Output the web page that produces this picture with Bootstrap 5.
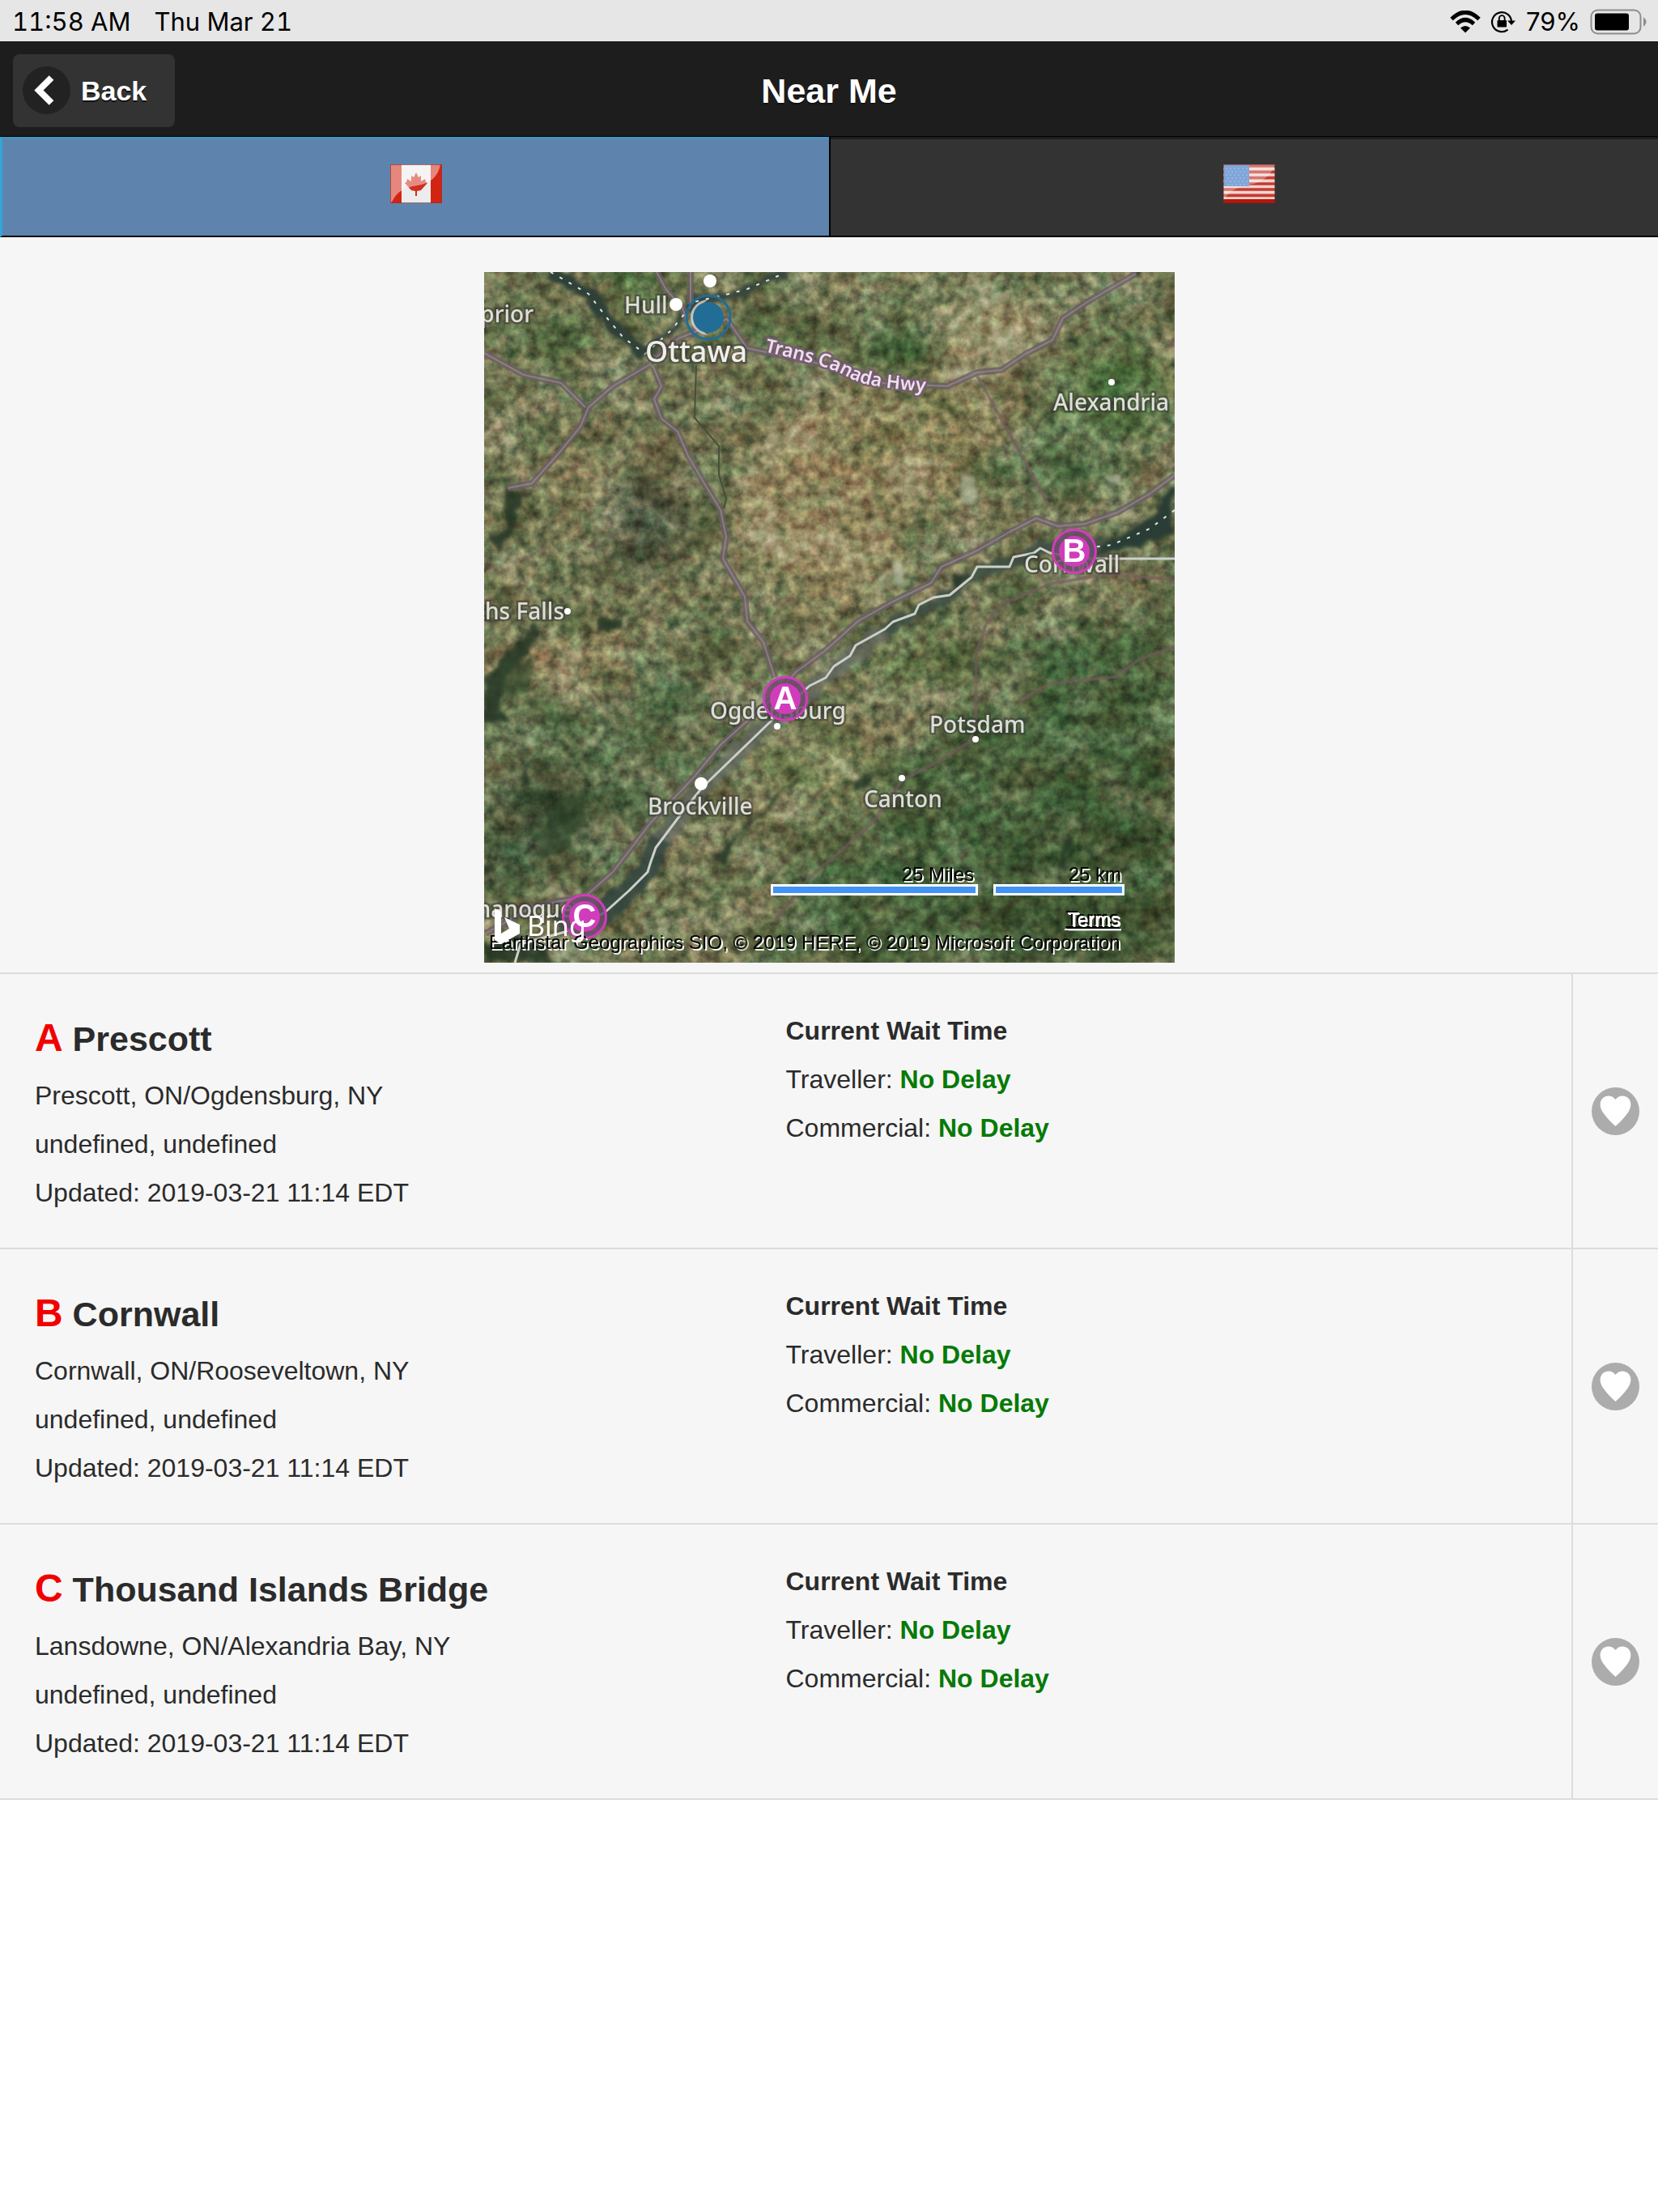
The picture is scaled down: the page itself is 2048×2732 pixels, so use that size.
<!DOCTYPE html>
<html lang="en">
<head>
<meta charset="utf-8">
<meta name="viewport" content="width=device-width, initial-scale=1">
<title>Near Me</title>
<link href="https://cdn.jsdelivr.net/npm/bootstrap@5.3.0/dist/css/bootstrap.min.css" rel="stylesheet">
<style>
  body { font-family: "Liberation Sans", Arial, sans-serif; font-size: 32px; line-height: 60px; color: #2b2b2b; background: #fff; }
  svg { display: block; }
  .status-bar { height: 51px; padding: 2px 12px 0 15px; background: #e6e6e6; color: #000; font: 31px/49px Inter, sans-serif; }
  .status-left { gap: 29px; font-variant-numeric: tabular-nums; }
  .status-icons { gap: 12px; }
  .app-header { display: grid; grid-template-columns: 1fr auto 1fr; align-items: center; height: 118px; padding: 4px 16px 0; background: #1d1d1d; border-bottom: 1px solid #000; }
  .app-header h1 { font-size: 43px; line-height: 60px; font-weight: 700; color: #fff; text-shadow: 0 2px 0 #111; }
  .back-btn { justify-self: start; gap: 13px; height: 90px; padding: 0 35px 0 12px; border: 0; border-radius: 8px; background: #333; color: #fff; font-size: 34px; font-weight: 700; line-height: 60px; text-shadow: 0 2px 0 #111; }
  .back-btn:hover { background: #3c3c3c; color: #fff; }
  .tab { height: 124px; padding-bottom: 9px; background: #333; border-top: 3px solid #1d1d1d; border-bottom: 2px solid #000; }
  .tab-on { background: #5e84ad; border-top-color: #4793bd; border-left: 3px solid #33a5d9; box-shadow: 2px 0 0 #000; z-index: 1; }
  .tab-off { padding-left: 13px; }
  .content-area { background: #f6f6f6; }
  .map-wrap { padding: 43px 0 12px; }
  .map-wrap svg { width: 853px; max-width: 100%; height: auto; }
  .place { font-family: "Noto Sans", "Open Sans", sans-serif; font-size: 28px; font-weight: 500; fill: #dededb; stroke: #35382f; stroke-opacity: .5; stroke-width: 5px; paint-order: stroke; }
  .place-lg { font-size: 36px; fill: #efefec; }
  .hwy { font-size: 23px; font-weight: 600; fill: #f1dff0; stroke: #755c73; stroke-opacity: .9; }
  .legal { font-family: "Liberation Sans", Arial, sans-serif; font-size: 24px; fill: #000; text-shadow: 2px 2px 0 #fff; }
  .terms { fill: #fff; text-shadow: -2px -2px 0 #000, 1px 1px 0 #fff; }
  .brand { font-family: "Noto Sans", sans-serif; font-size: 34px; fill: #fff; }
  .pin-letter { font-family: "Liberation Sans", Arial, sans-serif; font-size: 40px; font-weight: 700; fill: #fff; text-anchor: middle; }
  .crossing { border-top: 2px solid #dcdcdc; }
  .crossing-list { border-bottom: 2px solid #dcdcdc; }
  .crossing-link { padding: 40px 43px 38px; color: #2b2b2b; text-decoration: none; }
  .crossing-link h2 { margin: 9px 0; font-size: 43px; line-height: 62px; font-weight: 700; }
  .crossing-link h2 span { font-size: 48px; color: #f20000; line-height: 60px; }
  .crossing-link p { margin: 0; }
  .no-delay { color: #077a07; }
  .fav-btn { width: 107px; padding: 0; border: 0; border-left: 2px solid #dcdcdc; border-radius: 0; }
</style>
<script src="https://cdn.jsdelivr.net/npm/bootstrap@5.3.0/dist/js/bootstrap.bundle.min.js"></script>
</head>
<body>
<div class="status-bar d-flex justify-content-between align-items-center">
  <div class="status-left d-flex"><span>11:58 AM</span><span>Thu Mar 21</span></div>
  <div class="status-icons d-flex align-items-center">
    <svg width="38" height="28" viewBox="0 0 38 28" aria-hidden="true"><g fill="none" stroke="#000" stroke-width="5"><path d="M2 10.500Q19-6 36 10.500"/><path d="M8.500 16.500Q19 6.500 29.500 16.500"/></g><path d="M13 21.500Q19 16.500 25 21.500L19 27.500Z"/></svg>
    <svg width="32" height="28" viewBox="0 0 32 28" aria-hidden="true"><path d="M21.500 23.600A12 12 0 1 1 26 14" fill="none" stroke="#000" stroke-width="2.200"/><path d="M21 12.500h10l-5 5.500z"/><rect x="8.500" y="12" width="11.500" height="8.500" rx="1"/><path d="M10.800 12V9.500a3.400 3.400 0 0 1 6.800 0V12" fill="none" stroke="#000" stroke-width="1.900"/></svg>
    <span>79%</span>
    <svg width="72" height="32" viewBox="0 0 72 32" aria-hidden="true"><rect x="1.500" y="1.500" width="61" height="29" rx="8" fill="none" stroke="#8c8c8c" stroke-width="2"/><rect x="6" y="5.500" width="42" height="21" rx="3"/><path d="M66 10q7 6 0 12z" fill="#8c8c8c"/></svg>
  </div>
</div>

<header class="app-header">
  <button type="button" class="btn back-btn d-flex align-items-center">
    <svg width="59" height="59" viewBox="0 0 59 59" aria-hidden="true"><circle cx="29.500" cy="29.500" r="29.500" fill="#222"/><path d="M35.500 14L20 29.500 35.500 45" fill="none" stroke="#fff" stroke-width="8"/></svg>
    Back
  </button>
  <h1 class="m-0">Near Me</h1>
  <span></span>
</header>

<nav class="row g-0" aria-label="Country">
  <a href="#canada" class="tab tab-on col-6 d-flex align-items-center justify-content-center position-relative" aria-label="Canada">
    <svg width="64" height="48" viewBox="0 0 64 48"><rect width="64" height="48" fill="#ececec"/><path fill="#d32412" d="M0 0h14v48H0zM50 0h14v48H50z"/><path fill="#cf2f1d" d="M32 10l3 6 3-2v7l5-3 1 4 2 1-8 9-5 1v6h-2v-6l-5-1-8-9 2-1 1-4 5 3v-7l3 2z"/><path fill="#fff" opacity=".45" d="M0 0h62Q58 22 34 26 10 29 3 45L0 48z"/><rect x=".5" y=".5" width="63" height="47" fill="none" stroke="#8e3433" opacity=".7"/></svg>
  </a>
  <a href="#usa" class="tab tab-off col-6 d-flex align-items-center justify-content-center" aria-label="United States">
    <svg width="64" height="48" viewBox="0 0 64 48"><rect width="64" height="48" fill="#f1d3cd"/><path stroke="#c43c32" stroke-width="3.700" d="M0 2h64M0 9.300h64M0 16.700h64M0 24h64M0 31h64M0 38.300h64"/><path stroke="#b91508" stroke-width="5" d="M0 45.500h64"/><path fill="#fff" opacity=".3" d="M0 0h64Q57 20 34 25 10 29 2 42L0 44z"/><rect x="1" y="1" width="31" height="26" fill="#7fa5da"/><path d="M3 5h28M5 9h26M3 13h28M5 17h26M3 21h28M5 25h26" stroke="#a0bde4" stroke-width="1.500" stroke-dasharray="2 3"/><rect x=".5" y=".5" width="63" height="47" fill="none" stroke="#5d2a2a" opacity=".5"/></svg>
  </a>
</nav>

<main class="content-area">
  <div class="map-wrap d-flex justify-content-center">
    <svg viewBox="0 0 853 853" role="img" aria-label="Map of border crossings near Ottawa">
      <defs>
        <filter id="grain" x="0" y="0" width="100%" height="100%" color-interpolation-filters="sRGB"><feTurbulence type="fractalNoise" baseFrequency=".075" numOctaves="4" seed="8"/><feColorMatrix values="1.100 .35 0 0 -.205  1.100 0 0 0 -.03  1.100 .1 0 0 -.08  0 0 0 0 1"/></filter>
        <filter id="patches" x="0" y="0" width="100%" height="100%" color-interpolation-filters="sRGB"><feTurbulence type="fractalNoise" baseFrequency=".016 .022" numOctaves="4" seed="21"/><feColorMatrix values="1.300 .7 0 0 -.5  1.300 .1 0 0 -.2  1.300 .2 0 0 -.25  0 0 0 0 1"/></filter>
        <filter id="soft" x="-30%" y="-30%" width="160%" height="160%"><feGaussianBlur stdDeviation="20"/></filter>
        <filter id="rough" x="-10%" y="-10%" width="120%" height="120%"><feTurbulence type="fractalNoise" baseFrequency=".05" numOctaves="2" seed="3"/><feDisplacementMap in="SourceGraphic" scale="16" xChannelSelector="R" yChannelSelector="G"/><feGaussianBlur stdDeviation="2"/></filter>
        <clipPath id="frame"><rect width="853" height="853"/></clipPath>
        <path id="hwyLine" d="M346 98C395 110 425 116 450 130S510 143 560 150"/>
      </defs>
      <g clip-path="url(#frame)">
        <!-- terrain -->
        <rect width="853" height="853" fill="#6f7350"/>
        <g filter="url(#soft)">
          <path fill="#48603b" d="M853 420L700 440 560 580 420 700 330 853H853z"/>
          <path fill="#5d6c49" d="M0 520L260 470 330 560 150 760 0 780z"/>
          <path fill="#3f5035" d="M20 620L120 620 130 700 0 760z"/>
          <path fill="#3f5431" d="M700 640L853 580V853H580z"/>
          <ellipse cx="420" cy="290" rx="110" ry="130" fill="#8e845d"/>
          <ellipse cx="540" cy="200" rx="120" ry="90" fill="#857e56"/>
          <ellipse cx="160" cy="260" rx="80" ry="50" fill="#7f7954"/>
          <ellipse cx="100" cy="480" rx="90" ry="40" fill="#807a55"/>
          <ellipse cx="620" cy="70" rx="70" ry="45" fill="#9b956f"/>
          <ellipse cx="515" cy="95" rx="60" ry="34" fill="#385a32"/>
          <ellipse cx="195" cy="305" rx="45" ry="65" fill="#4c533d"/>
          <ellipse cx="780" cy="150" rx="80" ry="60" fill="#526f40"/>
          <ellipse cx="190" cy="15" rx="35" ry="25" fill="#3f6630"/>
          <ellipse cx="90" cy="90" rx="50" ry="26" fill="#536940"/>
          <ellipse cx="365" cy="75" rx="40" ry="20" fill="#4c683c"/>
          <ellipse cx="700" cy="230" rx="90" ry="50" fill="#5b6e49"/>
          <ellipse cx="540" cy="480" rx="70" ry="40" fill="#637349"/>
          <ellipse cx="410" cy="610" rx="80" ry="35" fill="#788052"/>
        </g>
        <rect width="853" height="853" filter="url(#patches)" opacity=".5" style="mix-blend-mode:soft-light"/>
        <rect width="853" height="853" filter="url(#grain)" opacity=".55" style="mix-blend-mode:overlay"/>
        <!-- water -->
        <g filter="url(#rough)">
          <path fill="none" stroke="#2f4037" stroke-width="16" d="M82 0L129 27 152 57 172 81 199 101"/>
          <path fill="none" stroke="#38473c" stroke-width="9" d="M199 101L232 71 259 37 302 27 325 21 372 1"/>
          <path fill="none" stroke="#3d4e43" stroke-width="16" opacity=".85" d="M775 337L735 342 687 340 650 360 605 372 575 400 535 420 495 442"/>
          <path fill="#2a3d36" d="M853 260L838 275 832 300 775 333 745 348 790 343 853 325z"/>
          <path fill="none" stroke="#646963" stroke-width="22" opacity=".7" d="M495 442L422 501 355 554 269 637 212 711"/>
          <path fill="none" stroke="#344641" stroke-width="26" opacity=".85" d="M218 700L205 735 179 762 149 791 90 805"/>
          <path fill="#263527" opacity=".85" d="M25 270L45 270 38 320 20 345 0 325 30 320zM0 500L60 435 75 445 30 500 20 540 30 555 0 555zM138 428L172 432 168 446 150 440 142 446zM310 700L300 735 280 720zM65 618L85 605 70 622zM575 375L600 372 590 392zM0 830L40 815 75 835 90 853H0zM455 630L485 622 460 642zM185 620L195 605 173 650zM715 700L730 700 715 725 720 745 708 735zM50 600L55 635 45 635zM0 738L15 735 14 742 0 745z"/>
          <path fill="#34472f" opacity=".6" d="M85 655L125 640 120 690 90 720 60 720 75 690zM20 480L60 480 55 510 30 530z"/>
          <path fill="none" stroke="#2c3a28" stroke-width="3" d="M292 303L250 345 210 370M205 420L180 431M386 624L330 680 300 710M635 675L642 690M690 685L712 690M785 625L800 635M470 790L465 800"/>
          <path fill="#b9c0a7" opacity=".6" d="M590 245q18 0 18 28-10 24-20 0zM765 250q25-5 20 10-12 8-20-10zM505 355h10l2 35q-10 10-12-35z"/>
        </g>
        <!-- roads -->
        <g fill="none" stroke-linejoin="round">
          <g stroke="#6c5f65" stroke-width="8" opacity=".8">
            <path id="r1" d="M0 100L49 127 95 137 125 167M205 114L159 141 129 167 119 191 92 224 59 261 29 267"/>
            <path id="r2" d="M209 117L219 141 210 157 219 181 239 197 252 227 272 261 292 294 299 327 295 354 322 401 325 431 345 457 359 501"/>
            <path id="r3" d="M213 0L225 22 245 44 250 60M255 0V40M205 112L240 82 300 58 325 94 432 117 489 137 572 141 609 124 639 121 669 101 702 84 715 57 745 37 805 2"/>
            <path id="r4" d="M853 251L822 274 782 297 742 311 709 314 682 304 649 321 609 344 565 364 552 384 505 407 462 431 422 467 385 494 359 524 292 584 259 624 205 681 159 741 125 771 59 784 2 817"/>
          </g>
          <g stroke="#978a8f" stroke-width="2" opacity=".7"><use href="#r1"/><use href="#r2"/><use href="#r3"/><use href="#r4"/></g>
          <path stroke="#77585f" stroke-width="4" opacity=".6" d="M609 128L628 162 655 210 685 265 698 290M853 463L810 478 780 500 700 508 660 530M620 435L608 470 607 555 600 580 560 605 516 628 480 680 440 715 400 750 360 800M853 380L770 373 700 385 640 410 620 435"/>
          <path stroke="#465039" stroke-width="2" d="M262 115L260 180 290 215 290 250 299 280 296 292"/>
          <path stroke="#ccd0ca" stroke-width="3" d="M853 354H740L699 347 687 341 679 347 654 352 649 364 609 364 602 377 575 399 555 402 537 411 532 422 505 432 495 441 459 461 452 474 432 487 422 501 402 511 355 554 269 637 242 671 212 711 205 731 202 741 179 764 149 791 100 815 45 830 38 853"/>
          <path stroke="#dfe5df" stroke-width="2" stroke-dasharray="4 9" d="M853 294L822 317 775 337 735 342M82 0L129 27 152 57 172 81 199 101 232 71 259 37 302 27 325 21 372 1"/>
        </g>
        <g fill="#fff"><circle cx="279" cy="11" r="8"/><circle cx="237" cy="40" r="8"/><circle cx="775" cy="136" r="4"/><circle cx="103" cy="419" r="4"/><circle cx="362" cy="561" r="4"/><circle cx="268" cy="632" r="8"/><circle cx="607" cy="577" r="4"/><circle cx="516" cy="625" r="4"/></g>
        <!-- labels -->
        <text class="place" x="61" y="62" text-anchor="end">Arnprior</text>
        <text class="place" x="173" y="51">Hull</text>
        <text class="place place-lg" x="199" y="111">Ottawa</text>
        <text class="place" x="703" y="171">Alexandria</text>
        <text class="place" x="99" y="429" text-anchor="end">Smiths Falls</text>
        <text class="place" x="667" y="371">Cornwall</text>
        <text class="place" x="279" y="552">Ogdensburg</text>
        <text class="place" x="550" y="569">Potsdam</text>
        <text class="place" x="469" y="661">Canton</text>
        <text class="place" x="202" y="670">Brockville</text>
        <text class="place" x="110" y="797" text-anchor="end">Gananoque</text>
        <text class="place hwy"><textPath href="#hwyLine">Trans Canada Hwy</textPath></text>
        <!-- position marker -->
        <path d="M277 34a22 22 0 1 0 0 44 25 25 0 0 1 0-44" fill="#d9d3d5" opacity=".8"/>
        <circle cx="277" cy="56" r="27" fill="none" stroke="#226d95" stroke-width="3"/><circle cx="277" cy="56" r="19" fill="#226d95"/>
        <!-- crossing pins -->
        <g stroke="#d13cbc" stroke-width="3" fill="#6f4c6c" fill-opacity=".85"><circle cx="372" cy="527" r="26.500"/><circle cx="729" cy="345" r="26.500"/><circle cx="124" cy="796" r="26.500"/></g>
        <g fill="#d13cbc"><circle cx="372" cy="527" r="19"/><circle cx="729" cy="345" r="19"/><circle cx="124" cy="796" r="19"/></g>
        <text class="pin-letter" x="372" y="540">A</text>
        <text class="pin-letter" x="729" y="358">B</text>
        <text class="pin-letter" x="124" y="809">C</text>
        <!-- scale and attribution -->
        <text class="legal" x="605" y="752" text-anchor="end">25 Miles</text>
        <text class="legal" x="787" y="752" text-anchor="end">25 km</text>
        <g fill="#4393f4" stroke="#fff" stroke-width="3"><rect x="355.500" y="757.500" width="253" height="11"/><rect x="630.500" y="757.500" width="159" height="11"/></g>
        <text class="legal" x="6" y="836">Earthstar Geographics SIO, © 2019 HERE, © 2019 Microsoft Corporation</text>
        <a href="#terms"><text class="legal terms" x="786" y="808" text-anchor="end">Terms</text><path d="M717 812h69" stroke="#fff" stroke-width="2"/></a>
        <path fill="#fff" d="M13 786l8 4v27l10-6-6-14 19 9v11l-23 13-8-5z"/>
        <text class="brand" x="53" y="820">Bing</text>
      </g>
    </svg>
  </div>

  <ul class="crossing-list list-unstyled m-0">
    <li class="crossing d-flex">
      <a href="#prescott" class="crossing-link flex-grow-1">
        <div class="row g-0">
          <div class="col-6"><h2><span>A</span> Prescott</h2><p>Prescott, ON/Ogdensburg, NY</p><p>undefined, undefined</p><p>Updated: 2019-03-21 11:14 EDT</p></div>
          <div class="col-6"><p class="fw-bold">Current Wait Time</p><p>Traveller: <strong class="no-delay">No Delay</strong></p><p>Commercial: <strong class="no-delay">No Delay</strong></p></div>
        </div>
      </a>
      <button type="button" class="btn fav-btn d-flex align-items-center justify-content-center" aria-label="Add Prescott to favourites"><svg width="59" height="59" viewBox="0 0 59 59"><circle cx="29.500" cy="29.500" r="29.500" fill="#acacac"/><path fill="#fff" d="M29.500 15C34 9 41 9.500 45 13c5 5 4 12 0 18-4 6-9 11-15.500 17C23 42 18 37 14 31c-4-6-5-13 0-18 4-3.500 11-4 15.500 2z"/></svg></button>
    </li>
    <li class="crossing d-flex">
      <a href="#cornwall" class="crossing-link flex-grow-1">
        <div class="row g-0">
          <div class="col-6"><h2><span>B</span> Cornwall</h2><p>Cornwall, ON/Rooseveltown, NY</p><p>undefined, undefined</p><p>Updated: 2019-03-21 11:14 EDT</p></div>
          <div class="col-6"><p class="fw-bold">Current Wait Time</p><p>Traveller: <strong class="no-delay">No Delay</strong></p><p>Commercial: <strong class="no-delay">No Delay</strong></p></div>
        </div>
      </a>
      <button type="button" class="btn fav-btn d-flex align-items-center justify-content-center" aria-label="Add Cornwall to favourites"><svg width="59" height="59" viewBox="0 0 59 59"><circle cx="29.500" cy="29.500" r="29.500" fill="#acacac"/><path fill="#fff" d="M29.500 15C34 9 41 9.500 45 13c5 5 4 12 0 18-4 6-9 11-15.500 17C23 42 18 37 14 31c-4-6-5-13 0-18 4-3.500 11-4 15.500 2z"/></svg></button>
    </li>
    <li class="crossing d-flex">
      <a href="#thousand-islands" class="crossing-link flex-grow-1">
        <div class="row g-0">
          <div class="col-6"><h2><span>C</span> Thousand Islands Bridge</h2><p>Lansdowne, ON/Alexandria Bay, NY</p><p>undefined, undefined</p><p>Updated: 2019-03-21 11:14 EDT</p></div>
          <div class="col-6"><p class="fw-bold">Current Wait Time</p><p>Traveller: <strong class="no-delay">No Delay</strong></p><p>Commercial: <strong class="no-delay">No Delay</strong></p></div>
        </div>
      </a>
      <button type="button" class="btn fav-btn d-flex align-items-center justify-content-center" aria-label="Add Thousand Islands Bridge to favourites"><svg width="59" height="59" viewBox="0 0 59 59"><circle cx="29.500" cy="29.500" r="29.500" fill="#acacac"/><path fill="#fff" d="M29.500 15C34 9 41 9.500 45 13c5 5 4 12 0 18-4 6-9 11-15.500 17C23 42 18 37 14 31c-4-6-5-13 0-18 4-3.500 11-4 15.500 2z"/></svg></button>
    </li>
  </ul>
</main>
</body>
</html>
